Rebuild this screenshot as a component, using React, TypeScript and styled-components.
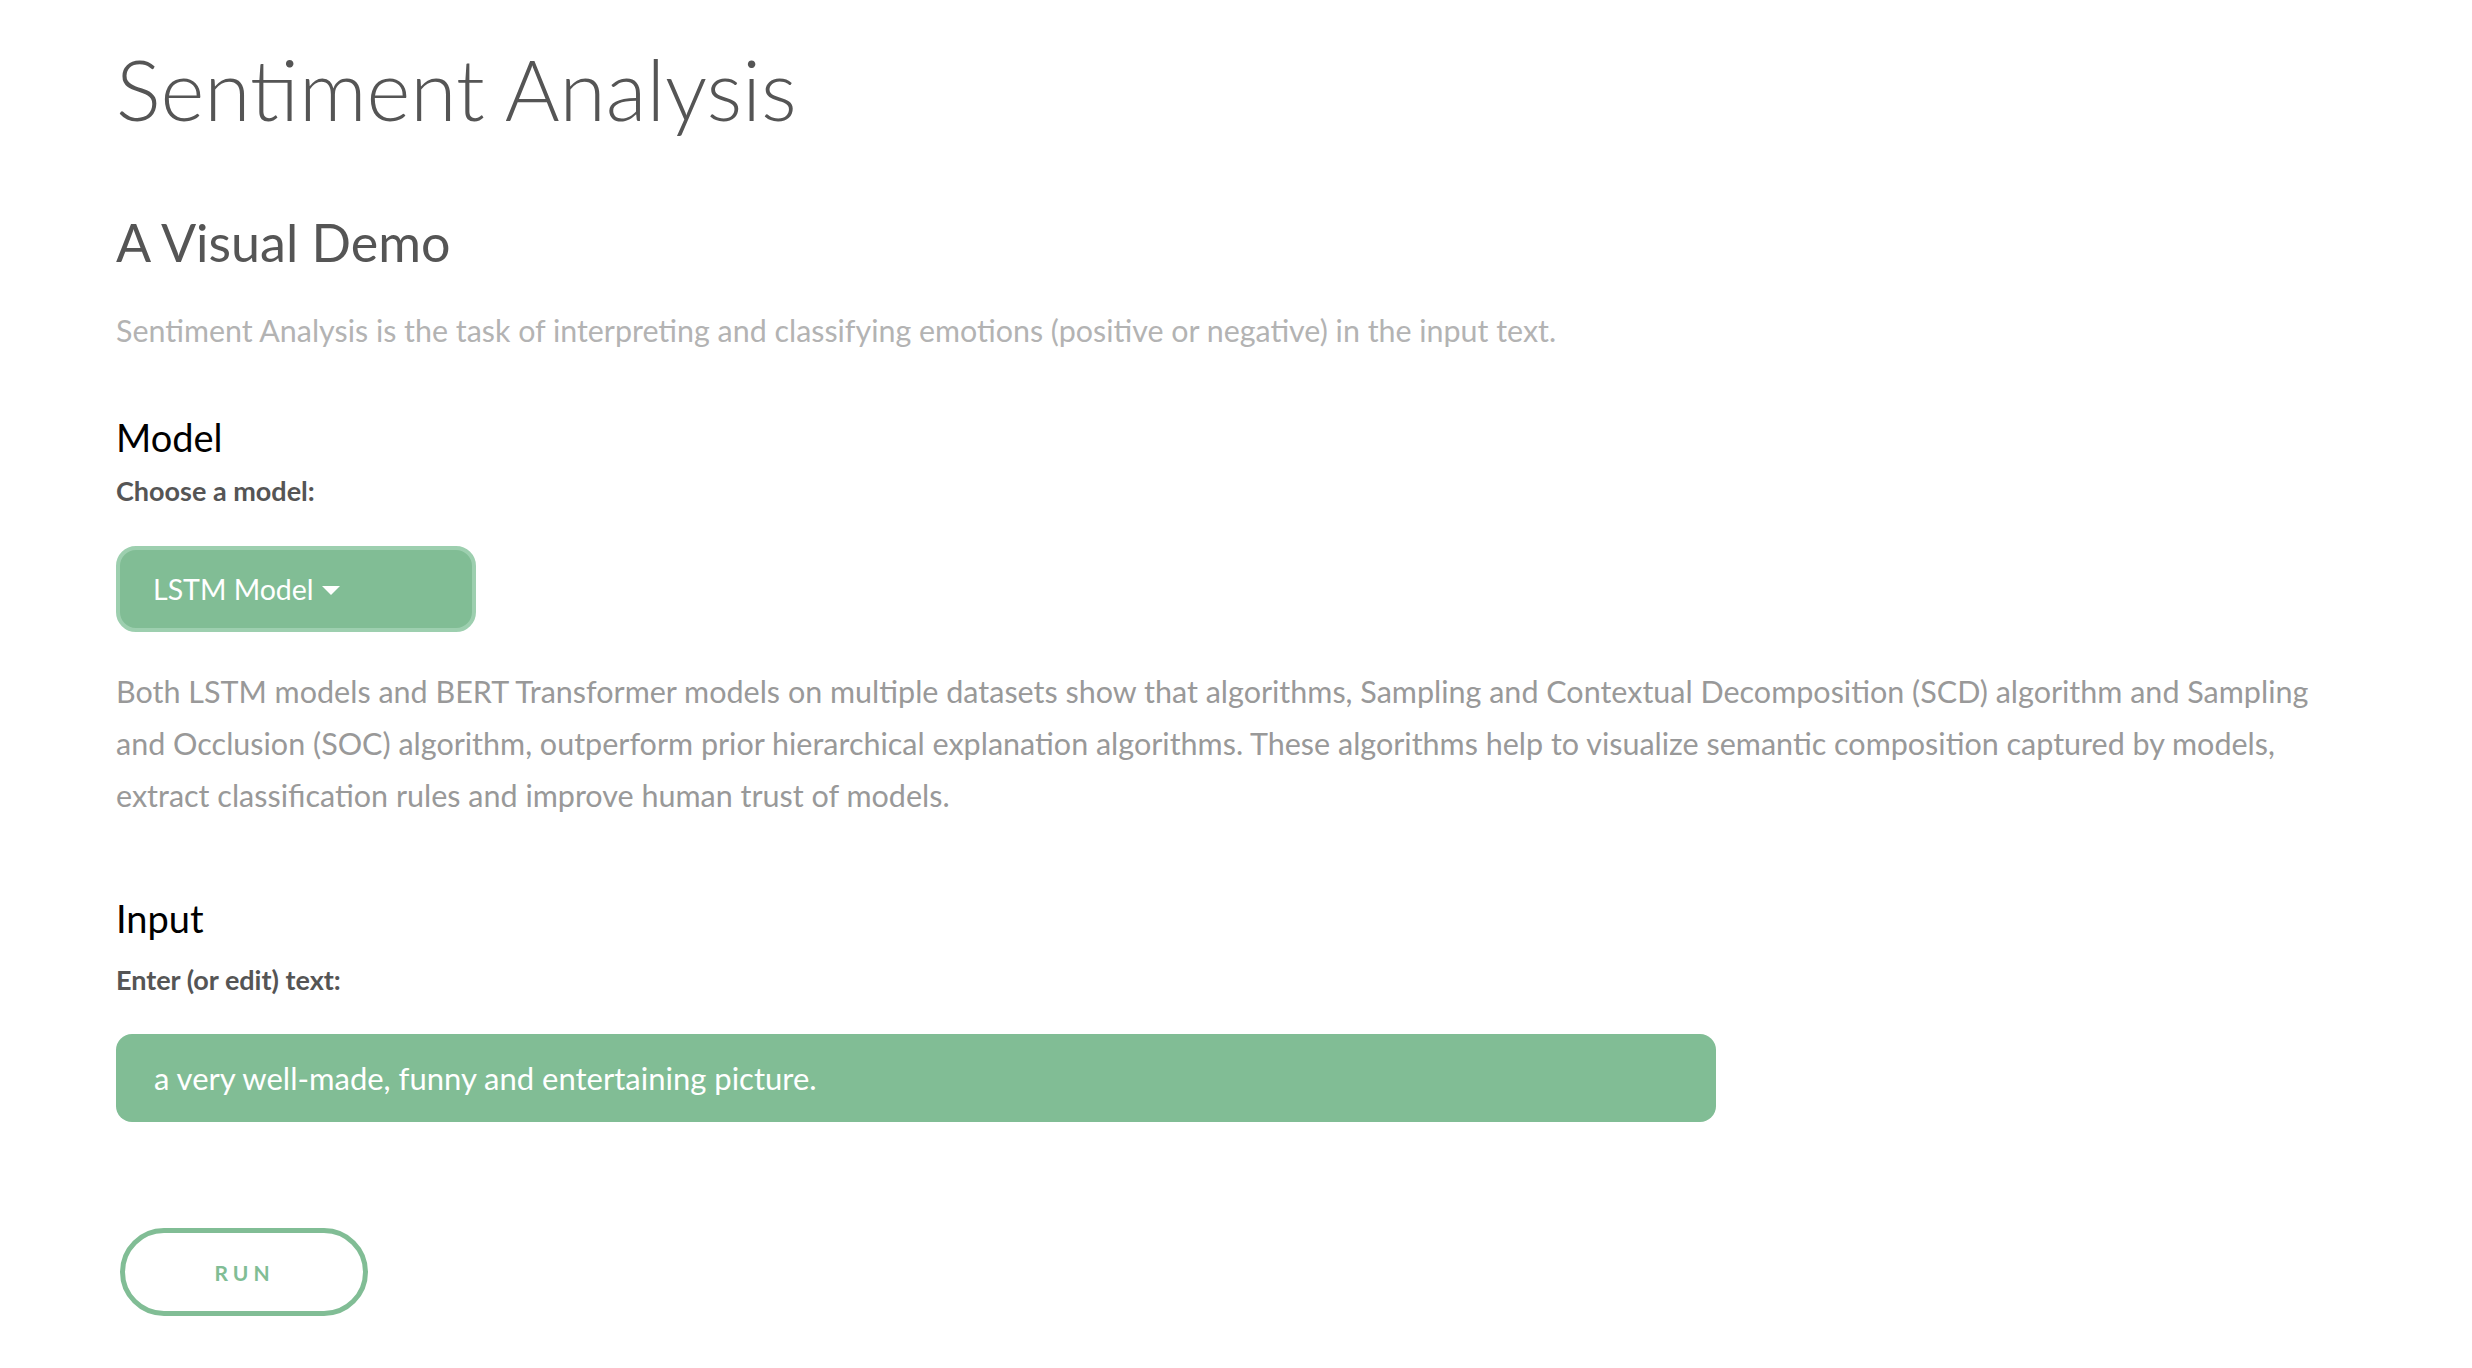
import React from "react";
import styled, { createGlobalStyle } from "styled-components";

const GlobalStyle = createGlobalStyle`
  html, body {
    margin: 0;
    padding: 0;
    background: #ffffff;
  }
  body {
    font-family: Lato, "Open Sans", "Liberation Sans", sans-serif;
    -webkit-font-smoothing: antialiased;
  }
  * { box-sizing: border-box; }
`;

const GREEN = "#81bd95";

const Page = styled.main`
  display: flex;
  flex-direction: column;
  align-items: flex-start;
  padding: 36px 117px 40px 116px;
  width: 100%;
`;

const Title = styled.h1`
  margin: 0;
  font-size: 84px;
  line-height: 106px;
  font-weight: 300;
  color: #555555;
`;

const Subtitle = styled.h2`
  margin: 66px 0 0;
  font-size: 52px;
  line-height: 68px;
  font-weight: 400;
  color: #555555;
`;

const Lead = styled.p`
  margin: 34px 0 0;
  font-size: 30.4px;
  line-height: 40px;
  color: #b3b3b3;
`;

const SectionTitle = styled.h3<{ $gap: number }>`
  margin: ${(p) => p.$gap}px 0 0;
  font-size: 38px;
  line-height: 48px;
  font-weight: 400;
  color: #000000;
`;

const FieldLabel = styled.label<{ $gap: number }>`
  margin: ${(p) => p.$gap}px 0 0;
  font-size: 27px;
  line-height: 34px;
  font-weight: 700;
  color: #555555;
`;

const DropdownButton = styled.button`
  margin-top: 38px;
  width: 360px;
  height: 86px;
  display: flex;
  align-items: center;
  gap: 8px;
  padding: 0 0 0 33px;
  background: ${GREEN};
  border: 4px solid #9dcfaf;
  border-radius: 20px;
  color: #ffffff;
  font-family: inherit;
  font-size: 28.5px;
  cursor: pointer;

  &::after {
    content: "";
    display: inline-block;
    width: 0;
    height: 0;
    border-left: 9px solid transparent;
    border-right: 9px solid transparent;
    border-top: 9px solid #ffffff;
    margin-top: 3px;
  }
`;

const Body = styled.p`
  margin: 33px 0 0;
  font-size: 30.5px;
  line-height: 52px;
  color: #999999;
  max-width: 2239px;
`;

const TextInput = styled.input`
  margin-top: 37px;
  width: 1600px;
  height: 88px;
  padding: 0 38px;
  background: ${GREEN};
  border: none;
  border-radius: 16px;
  color: #ffffff;
  font-family: inherit;
  font-size: 31px;
  outline: none;
`;

const RunButton = styled.button`
  margin: 106px 0 0 4px;
  width: 248px;
  height: 88px;
  background: #ffffff;
  border: 5px solid ${GREEN};
  border-radius: 44px;
  color: ${GREEN};
  font-family: inherit;
  font-size: 21px;
  font-weight: 700;
  letter-spacing: 5px;
  padding-left: 7px;
  cursor: pointer;
`;

export default function App() {
  return (
    <>
      <GlobalStyle />
      <Page>
        <Title>Sentiment Analysis</Title>
        <Subtitle>A Visual Demo</Subtitle>
        <Lead>
          Sentiment Analysis is the task of interpreting and classifying emotions (positive or
          negative) in the input text.
        </Lead>

        <SectionTitle $gap={63}>Model</SectionTitle>
        <FieldLabel $gap={13}>Choose a model:</FieldLabel>
        <DropdownButton type="button">LSTM Model</DropdownButton>
        <Body>
          Both LSTM models and BERT Transformer models on multiple datasets show that algorithms,
          Sampling and Contextual Decomposition (SCD) algorithm and Sampling and Occlusion (SOC)
          algorithm, outperform prior hierarchical explanation algorithms. These algorithms help to
          visualize semantic composition captured by models, extract classification rules and
          improve human trust of models.
        </Body>

        <SectionTitle $gap={73}>Input</SectionTitle>
        <FieldLabel $gap={21}>Enter (or edit) text:</FieldLabel>
        <TextInput defaultValue="a very well-made, funny and entertaining picture." />
        <RunButton type="button">RUN</RunButton>
      </Page>
    </>
  );
}
